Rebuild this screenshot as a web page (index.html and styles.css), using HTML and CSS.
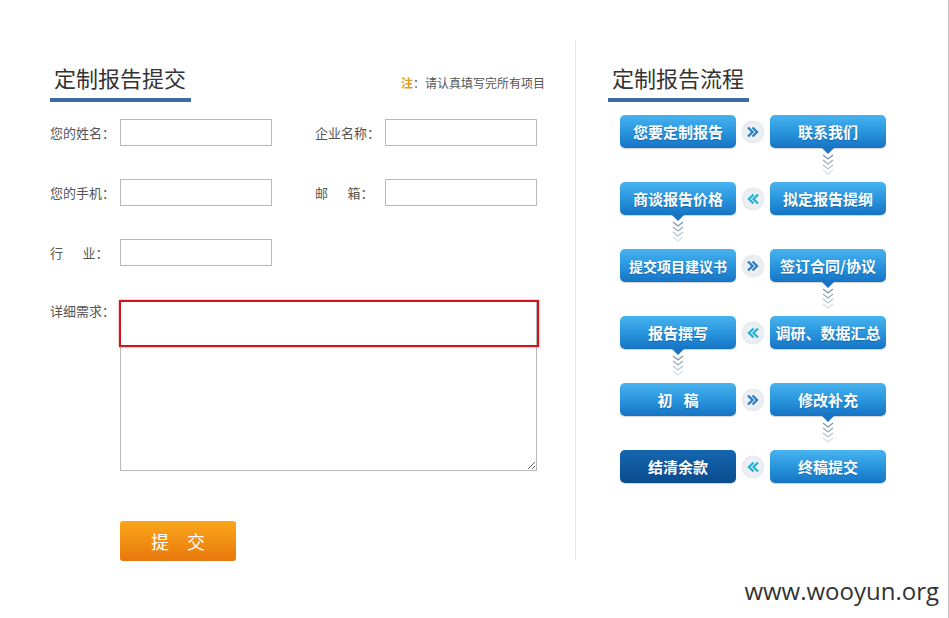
FILE: index.html
```html
<!DOCTYPE html>
<html lang="zh-CN">
<head>
    <meta charset="UTF-8">
    <title>定制报告</title>
    <link rel="stylesheet" href="styles.css">
</head>
<body>
    <div class="page">
        <!-- 提交表单 -->
        <section class="form-panel">
            <div class="panel-head">
                <h2 class="panel-title">定制报告提交</h2>
                <p class="note"><b>注</b>：请认真填写完所有项目</p>
            </div>

            <form class="report-form">
                <div class="form-row">
                    <label class="field"><span class="field-label">您的姓名：</span><input type="text"></label>
                    <label class="field"><span class="field-label">企业名称：</span><input type="text"></label>
                </div>
                <div class="form-row">
                    <label class="field"><span class="field-label">您的手机：</span><input type="text"></label>
                    <label class="field"><span class="field-label">邮&emsp;&ensp;箱：</span><input type="text"></label>
                </div>
                <div class="form-row">
                    <label class="field"><span class="field-label">行&emsp;&ensp;业：</span><input type="text"></label>
                </div>
                <div class="form-row detail-row">
                    <span class="field-label">详细需求：</span>
                    <div class="detail-box">
                        <textarea></textarea>
                        <span class="highlight"></span>
                    </div>
                </div>
                <div class="form-actions">
                    <button type="button" class="submit-btn">提　交</button>
                </div>
            </form>
        </section>

        <!-- 流程 -->
        <section class="flow-panel">
            <h2 class="panel-title">定制报告流程</h2>

            <div class="flow-grid">
                <div class="flow-step">您要定制报告</div>
                <div class="flow-arrow"><svg width="12" height="12" viewBox="0 0 12 12"><path d="M1 1.5 L5.5 6 L1 10.5 M5.5 1.5 L10 6 L5.5 10.5" fill="none" stroke="#2b7fc6" stroke-width="2.4"/></svg></div>
                <div class="flow-step">联系我们</div>
                <div class="flow-down right"><svg width="16" height="30" viewBox="0 0 16 30"><polygon points="2,0 14,0 8,6" fill="#1a73c2"/><path d="M3 7 L8 11 L13 7" fill="none" stroke="#7e93aa" stroke-width="1.2"/><path d="M3 12 L8 16 L13 12" fill="none" stroke="#97a9bc" stroke-width="1.2"/><path d="M3 17 L8 21 L13 17" fill="none" stroke="#b5c3d1" stroke-width="1.2"/><path d="M3 22 L8 26 L13 22" fill="none" stroke="#d6dee6" stroke-width="1.2"/></svg></div>

                <div class="flow-step">商谈报告价格</div>
                <div class="flow-arrow back"><svg width="12" height="12" viewBox="0 0 12 12"><path d="M11 1.5 L6.5 6 L11 10.5 M6.5 1.5 L2 6 L6.5 10.5" fill="none" stroke="#27b1d6" stroke-width="2.4"/></svg></div>
                <div class="flow-step">拟定报告提纲</div>
                <div class="flow-down left"><svg width="16" height="30" viewBox="0 0 16 30"><polygon points="2,0 14,0 8,6" fill="#1a73c2"/><path d="M3 7 L8 11 L13 7" fill="none" stroke="#7e93aa" stroke-width="1.2"/><path d="M3 12 L8 16 L13 12" fill="none" stroke="#97a9bc" stroke-width="1.2"/><path d="M3 17 L8 21 L13 17" fill="none" stroke="#b5c3d1" stroke-width="1.2"/><path d="M3 22 L8 26 L13 22" fill="none" stroke="#d6dee6" stroke-width="1.2"/></svg></div>

                <div class="flow-step tight">提交项目建议书</div>
                <div class="flow-arrow"><svg width="12" height="12" viewBox="0 0 12 12"><path d="M1 1.5 L5.5 6 L1 10.5 M5.5 1.5 L10 6 L5.5 10.5" fill="none" stroke="#2b7fc6" stroke-width="2.4"/></svg></div>
                <div class="flow-step">签订合同/协议</div>
                <div class="flow-down right"><svg width="16" height="30" viewBox="0 0 16 30"><polygon points="2,0 14,0 8,6" fill="#1a73c2"/><path d="M3 7 L8 11 L13 7" fill="none" stroke="#7e93aa" stroke-width="1.2"/><path d="M3 12 L8 16 L13 12" fill="none" stroke="#97a9bc" stroke-width="1.2"/><path d="M3 17 L8 21 L13 17" fill="none" stroke="#b5c3d1" stroke-width="1.2"/><path d="M3 22 L8 26 L13 22" fill="none" stroke="#d6dee6" stroke-width="1.2"/></svg></div>

                <div class="flow-step">报告撰写</div>
                <div class="flow-arrow back"><svg width="12" height="12" viewBox="0 0 12 12"><path d="M11 1.5 L6.5 6 L11 10.5 M6.5 1.5 L2 6 L6.5 10.5" fill="none" stroke="#27b1d6" stroke-width="2.4"/></svg></div>
                <div class="flow-step">调研、数据汇总</div>
                <div class="flow-down left"><svg width="16" height="30" viewBox="0 0 16 30"><polygon points="2,0 14,0 8,6" fill="#1a73c2"/><path d="M3 7 L8 11 L13 7" fill="none" stroke="#7e93aa" stroke-width="1.2"/><path d="M3 12 L8 16 L13 12" fill="none" stroke="#97a9bc" stroke-width="1.2"/><path d="M3 17 L8 21 L13 17" fill="none" stroke="#b5c3d1" stroke-width="1.2"/><path d="M3 22 L8 26 L13 22" fill="none" stroke="#d6dee6" stroke-width="1.2"/></svg></div>

                <div class="flow-step">初&ensp;&nbsp;稿</div>
                <div class="flow-arrow"><svg width="12" height="12" viewBox="0 0 12 12"><path d="M1 1.5 L5.5 6 L1 10.5 M5.5 1.5 L10 6 L5.5 10.5" fill="none" stroke="#2b7fc6" stroke-width="2.4"/></svg></div>
                <div class="flow-step">修改补充</div>
                <div class="flow-down right"><svg width="16" height="30" viewBox="0 0 16 30"><polygon points="2,0 14,0 8,6" fill="#1a73c2"/><path d="M3 7 L8 11 L13 7" fill="none" stroke="#7e93aa" stroke-width="1.2"/><path d="M3 12 L8 16 L13 12" fill="none" stroke="#97a9bc" stroke-width="1.2"/><path d="M3 17 L8 21 L13 17" fill="none" stroke="#b5c3d1" stroke-width="1.2"/><path d="M3 22 L8 26 L13 22" fill="none" stroke="#d6dee6" stroke-width="1.2"/></svg></div>

                <div class="flow-step done">结清余款</div>
                <div class="flow-arrow back"><svg width="12" height="12" viewBox="0 0 12 12"><path d="M11 1.5 L6.5 6 L11 10.5 M6.5 1.5 L2 6 L6.5 10.5" fill="none" stroke="#27b1d6" stroke-width="2.4"/></svg></div>
                <div class="flow-step">终稿提交</div>
            </div>
        </section>

        <div class="watermark">www.wooyun.org</div>
    </div>
</body>
</html>
```

FILE: styles.css
```css
/* Page frame */
body {
    margin: 0;
    background: #fff;
    font-family: "Noto Sans CJK SC", "Noto Sans", sans-serif;
    color: #555;
}

.page {
    position: relative;
    display: flex;
    width: 948px;
    height: 618px;
    border-right: 1px solid #c4c4c4;
}

/* Shared title with blue underline */
.panel-title {
    display: inline-block;
    margin: 0;
    padding: 0 5px 6px 4px;
    font-size: 22px;
    line-height: 30px;
    font-weight: normal;
    color: #333;
    border-bottom: 4px solid #3b6ca6;
}

/* Left: form */
.form-panel {
    width: 495px;
    padding: 62px 0 0 50px;
}

.panel-head {
    display: flex;
    justify-content: space-between;
    align-items: flex-end;
}

.note {
    margin: 0 0 11px;
    font-size: 12px;
    line-height: 16px;
    color: #555;
}

.note b {
    color: #e69a1c;
}

.report-form {
    margin-top: 17px;
}

.form-row {
    display: flex;
    gap: 43px;
    margin-bottom: 33px;
}

.field {
    display: flex;
    align-items: center;
}

.field-label {
    width: 70px;
    font-size: 13px;
    line-height: 20px;
    color: #555;
    white-space: nowrap;
}

.field input {
    width: 152px;
    height: 27px;
    box-sizing: border-box;
    border: 1px solid #b9b9b9;
    padding: 0 4px;
}

.detail-row {
    gap: 0;
    margin-top: 34px;
    margin-bottom: 50px;
}

.detail-row .field-label {
    margin-top: 1px;
}

.detail-box {
    position: relative;
}

.detail-box textarea {
    display: block;
    width: 417px;
    height: 171px;
    box-sizing: border-box;
    border: 1px solid #b9b9b9;
    margin: 0;
}

/* red mark drawn over the top of the textarea */
.highlight {
    position: absolute;
    left: -1px;
    top: 0;
    width: 420px;
    height: 47px;
    box-sizing: border-box;
    border: 2px solid #d3141f;
    box-shadow: 0 0 2px rgba(220, 40, 40, 0.6);
}

.form-actions {
    padding-left: 70px;
}

.submit-btn {
    width: 116px;
    height: 40px;
    border: none;
    border-radius: 3px;
    background: linear-gradient(#fba61a, #e8780d);
    color: #fff;
    font-family: "Noto Sans CJK SC", sans-serif;
    font-size: 18px;
    cursor: pointer;
}

/* Right: flow */
.flow-panel {
    margin: 40px 0 0 30px;
    height: 498px;
    padding: 22px 0 0 32px;
    border-left: 1px solid #e6e6e6;
}

.flow-grid {
    display: grid;
    grid-template-columns: 116px 34px 116px;
    grid-template-rows: repeat(5, 33px 34px) 33px;
    margin: 13px 0 0 12px;
}

.flow-step {
    display: flex;
    align-items: center;
    justify-content: center;
    border-radius: 5px;
    background: linear-gradient(#47b3ef, #2793dc 55%, #1673c4);
    box-shadow: 0 1px 1px rgba(0, 0, 0, 0.18);
    color: #fff;
    font-size: 15px;
    font-weight: bold;
    text-shadow: 0 1px 1px rgba(0, 60, 120, 0.4);
    white-space: nowrap;
}

.flow-step.tight {
    font-size: 14px;
}

.flow-step.done {
    background: linear-gradient(#1566b0, #0a4c8f);
}

.flow-arrow {
    width: 22px;
    height: 22px;
    align-self: center;
    justify-self: center;
    display: flex;
    align-items: center;
    justify-content: center;
    border-radius: 50%;
    background: radial-gradient(#f7f9fb, #dfe4e9);
    box-shadow: 0 0 1px rgba(0, 0, 0, 0.25);
}

.flow-down {
    grid-column: 1 / -1;
    display: flex;
}

.flow-down.left {
    padding-left: 50px;
}

.flow-down.right {
    padding-left: 200px;
}

.watermark {
    position: absolute;
    right: 9px;
    top: 574px;
    font-family: "Open Sans", sans-serif;
    font-size: 24px;
    color: #333;
}
```
